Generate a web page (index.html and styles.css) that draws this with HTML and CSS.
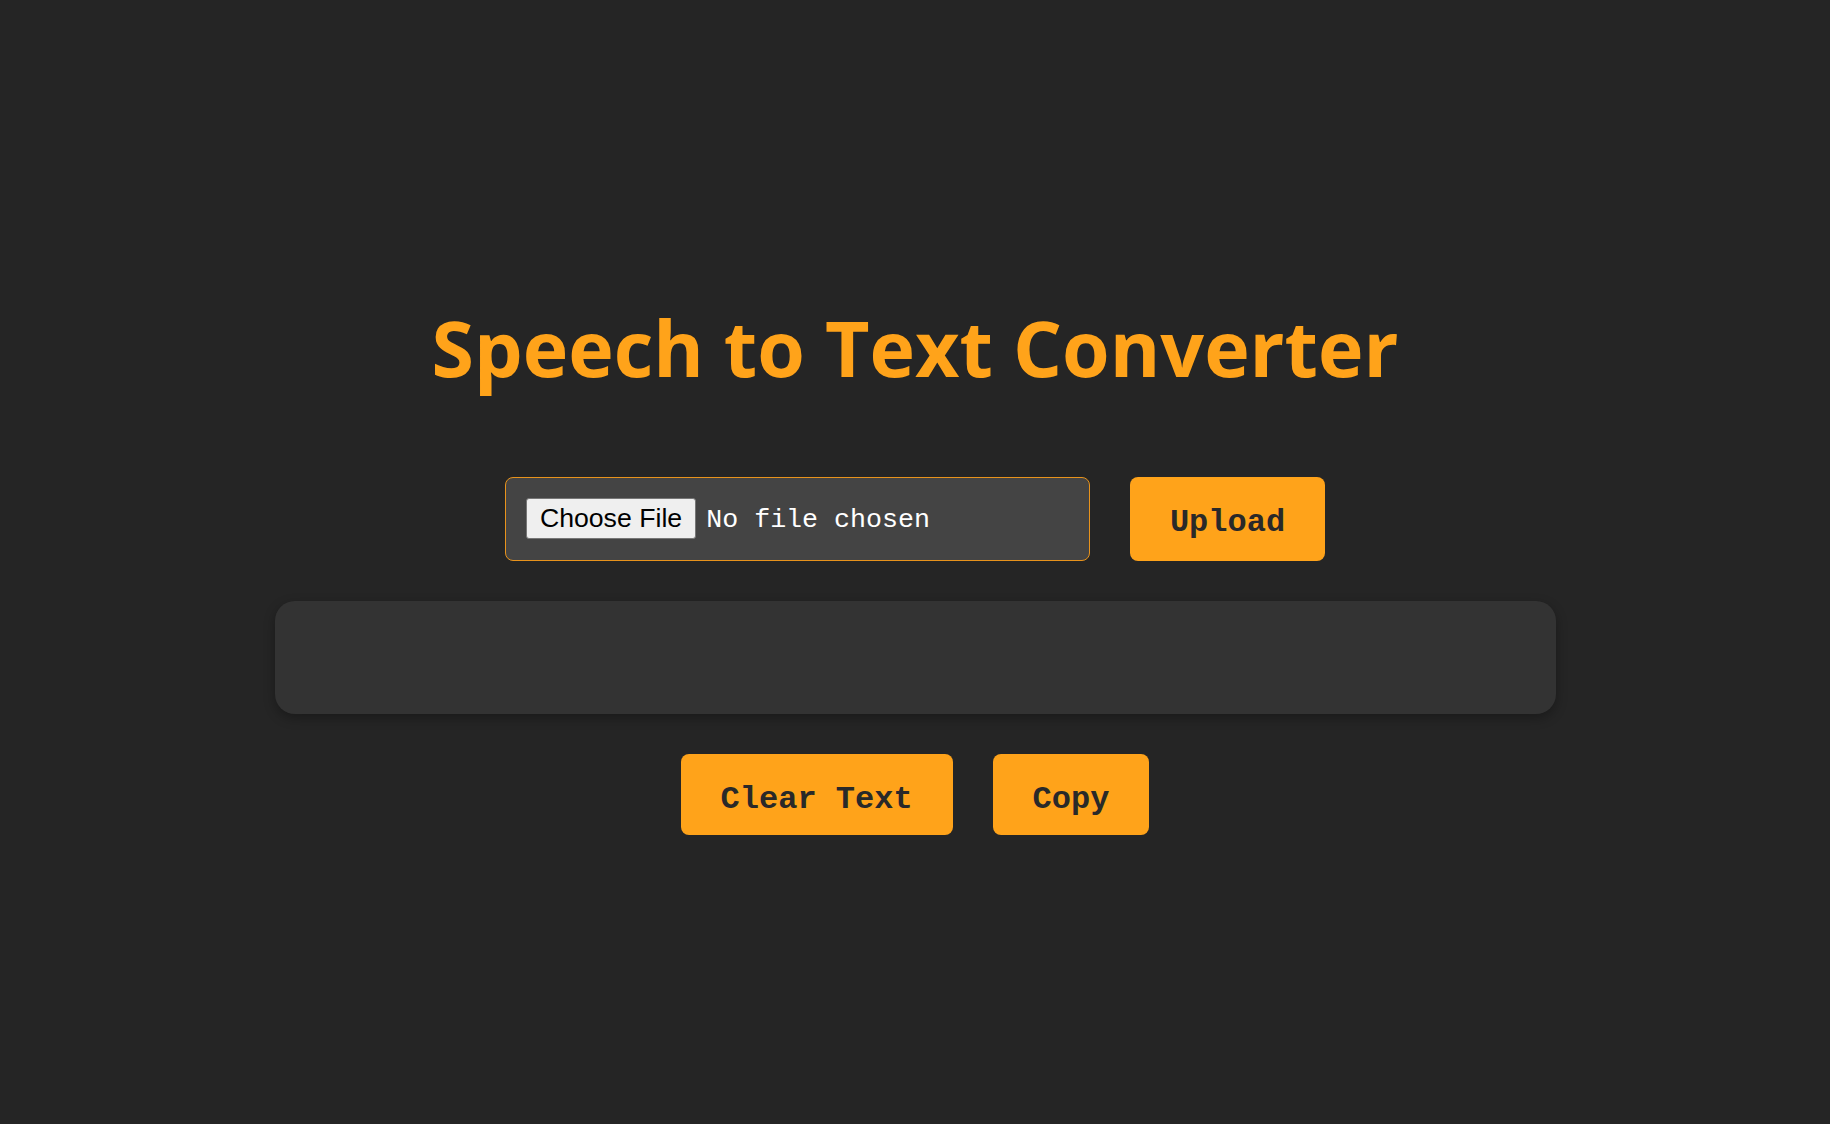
FILE: index.html
```html
<!DOCTYPE html>
<html lang="en">
<head>
<meta charset="UTF-8">
<title>Speech to Text Converter</title>
<link rel="stylesheet" href="styles.css">
</head>
<body>
<main class="app">
  <h1 class="title">Speech to Text Converter</h1>
  <div class="upload-row">
    <input class="file-input" type="file" accept="audio/*">
    <button class="btn btn-upload" type="button">Upload</button>
  </div>
  <div class="transcript"></div>
  <div class="actions">
    <button class="btn" type="button">Clear Text</button>
    <button class="btn" type="button">Copy</button>
  </div>
</main>
</body>
</html>
```
FILE: styles.css
```css
html, body {
  margin: 0;
  padding: 0;
  background: #252525;
}

.app {
  min-height: 100vh;
  box-sizing: border-box;
  padding-top: 11px;
  display: flex;
  flex-direction: column;
  align-items: center;
  justify-content: center;
}

.title {
  margin: 0 0 81px;
  font-family: "Open Sans", "Lato", sans-serif;
  font-weight: 700;
  font-size: 77px;
  line-height: 96px;
  color: #ffa31a;
}

.upload-row {
  display: flex;
  gap: 40px;
  align-items: stretch;
  height: 84px;
}

.file-input {
  box-sizing: border-box;
  width: 585px;
  height: 84px;
  padding: 20px 20px 0;
  font-family: "Liberation Mono", monospace;
  font-size: 26.67px;
  line-height: 41px;
  color: #ffffff;
  background: #444444;
  border: 1px solid #e8931c;
  border-radius: 8px;
}

.file-input::file-selector-button {
  font-family: "Liberation Sans", Arial, sans-serif;
  font-size: 26.67px;
  line-height: 31px;
  height: 41px;
  padding: 4px 13px;
  margin-right: 10px;
  color: #000000;
  background: #efefef;
  border: 1px solid #767676;
  border-radius: 3px;
}

.btn {
  font-family: "Liberation Mono", monospace;
  font-weight: 700;
  font-size: 32px;
  line-height: 41px;
  padding: 25px 40px 15px;
  color: #292929;
  background: #ffa31a;
  border: none;
  border-radius: 8px;
  cursor: pointer;
}

.btn-upload {
  padding-top: 7px;
  padding-bottom: 0;
}

.transcript {
  box-sizing: border-box;
  width: 70%;
  min-height: 113px;
  margin-top: 40px;
  padding: 20px;
  background: #333333;
  border-radius: 20px;
  box-shadow: 0 4px 12px rgba(0, 0, 0, 0.3);
}

.actions {
  display: flex;
  gap: 40px;
  margin-top: 40px;
}
```
